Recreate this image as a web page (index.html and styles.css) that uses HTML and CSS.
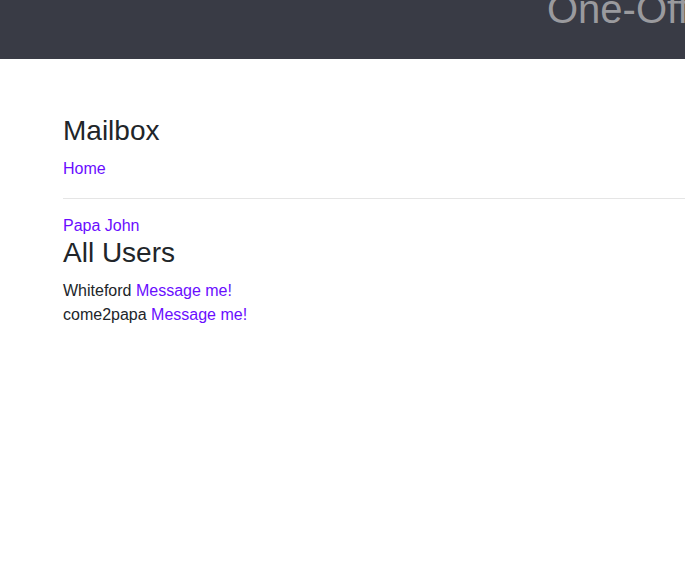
FILE: index.html
```html
<!DOCTYPE html>
<html>
<head>
<meta charset="utf-8">
<title>Mailbox</title>
<link rel="stylesheet" href="styles.css">
</head>
<body>
<header class="topbar">
  <h1 class="brand">One-Off Messenger</h1>
</header>
<main class="content">
  <h2 class="title">Mailbox</h2>
  <nav class="nav"><a href="#" class="link">Home</a></nav>
  <hr class="divider">
  <div class="current"><a href="#" class="link">Papa John</a></div>
  <h2 class="title title-users">All Users</h2>
  <ul class="users">
    <li class="user">Whiteford <a href="#" class="link">Message me!</a></li>
    <li class="user">come2papa <a href="#" class="link">Message me!</a></li>
  </ul>
</main>
</body>
</html>
```
FILE: styles.css
```css
html, body {
  margin: 0;
  padding: 0;
  overflow: hidden;
}
body {
  font-family: "Liberation Sans", Arial, sans-serif;
  font-size: 16px;
  line-height: 24px;
  color: #212529;
  background: #fff;
}
.topbar {
  height: 59px;
  background: #393b45;
  overflow: hidden;
  display: flex;
  padding-left: 547px;
}
.brand {
  margin: -15px 0 0 0;
  font-size: 40px;
  font-weight: 400;
  line-height: 48px;
  color: #9a9a9e;
  white-space: nowrap;
}
.content {
  padding: 0 0 0 63px;
  margin-top: 55px;
}
.title {
  margin: 0;
  font-size: 28px;
  font-weight: 400;
  line-height: 33.6px;
}
.nav {
  margin-top: 9.5px;
}
.link {
  color: #6a0dff;
  text-decoration: none;
}
.divider {
  border: 0;
  border-top: 1px solid #e5e5e5;
  margin: 17px 0 15px 0;
}
.title-users {
  margin-top: -2px;
}
.users {
  list-style: none;
  margin: 9px 0 0 0;
  padding: 0;
}
```
